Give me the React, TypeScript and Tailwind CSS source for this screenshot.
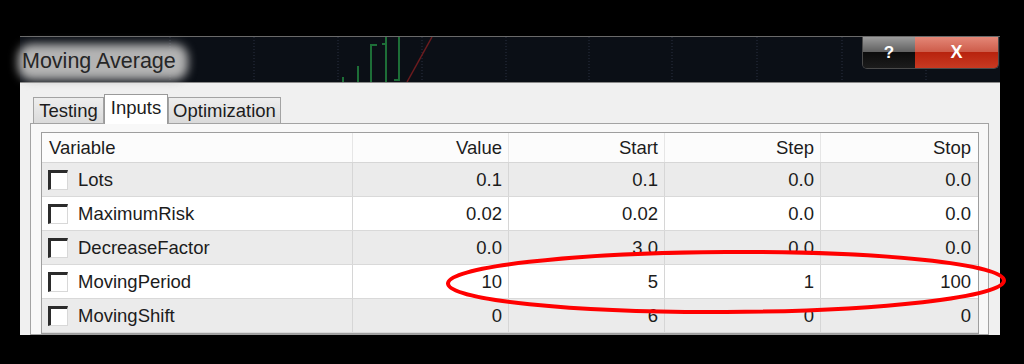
import React from 'react';

interface InputRow {
  name: string;
  value: string;
  start: string;
  step: string;
  stop: string;
}

const rows: InputRow[] = [
  { name: 'Lots', value: '0.1', start: '0.1', step: '0.0', stop: '0.0' },
  { name: 'MaximumRisk', value: '0.02', start: '0.02', step: '0.0', stop: '0.0' },
  { name: 'DecreaseFactor', value: '0.0', start: '3.0', step: '0.0', stop: '0.0' },
  { name: 'MovingPeriod', value: '10', start: '5', step: '1', stop: '100' },
  { name: 'MovingShift', value: '0', start: '6', step: '0', stop: '0' },
];

const gridX = [150, 234, 318, 402, 486, 569, 652, 737, 822, 906];

const ChartStrip: React.FC = () => (
  <svg className="absolute inset-0" width="980" height="45" viewBox="0 0 980 45">
    {gridX.map((x) => (
      <line key={x} x1={x} y1="0" x2={x} y2="45" stroke="#2a3140" strokeWidth="1" strokeDasharray="1 2" />
    ))}
    <g stroke="#1d6e37" strokeWidth="2" fill="none">
      <path d="M323 40 V45" />
      <path d="M338 29 V45" />
      <path d="M351 45 V8 H357" />
      <path d="M366 45 V0 M362 7 H366" />
      <path d="M379 0 V43 H374" />
    </g>
    <line x1="387" y1="45" x2="412" y2="0" stroke="#6b1b1e" strokeWidth="1.5" />
  </svg>
);

const Checkbox: React.FC = () => (
  <div className="w-[20px] h-[20px] bg-white border-t-[3px] border-l-[3px] border-r border-b border-t-[#2b2b2b] border-l-[#2b2b2b] border-r-[#d8d8d8] border-b-[#d8d8d8] shrink-0" />
);

const Tab: React.FC<{ label: string; width: string; active?: boolean }> = ({ label, width, active }) => (
  <div
    className={
      active
        ? `${width} h-[30px] -mb-px flex items-start justify-center pt-[1px] bg-white border border-b-0 border-[#9a9a9a] relative z-10`
        : `${width} h-[26px] flex items-start justify-center pt-[1px] bg-[linear-gradient(to_bottom,#eeeeee,#dadada)] border border-b-0 border-[#a3a3a3]`
    }
  >
    {label}
  </div>
);

const App: React.FC = () => {
  const cell = 'flex items-center justify-end pr-[6px] border-r border-[#d6d6d6]';

  return (
    <div
      className="w-[1024px] h-[364px] bg-black relative overflow-hidden pt-[36px] pl-[20px] text-[#1c1c1c]"
      style={{ fontFamily: '"Liberation Sans", Arial, sans-serif' }}
    >
      <div className="w-[980px] h-[299px] flex flex-col">
        {/* title bar */}
        <div className="h-[47px] bg-[#0b0f16] border-t border-[#6a6a6a] border-b border-b-[#8a8a8a] relative flex items-start justify-between shrink-0">
          <ChartStrip />
          <div className="relative mt-[8px]">
            <div className="absolute -left-[2px] -top-[1px] w-[170px] h-[36px] bg-[#b3b3b3] blur-[5px] rounded-[14px]" />
            <span className="relative block pl-[2px] text-[21.5px] leading-[32px] text-[#262626]">Moving Average</span>
          </div>
          <div className="relative flex mr-[1px] rounded-b-[5px] overflow-hidden border border-t-0 border-[#4a4a4a]">
            <div className="w-[52px] h-[31px] flex items-center justify-center bg-[linear-gradient(to_bottom,#9c9c9c,#5e5e5e_50%,#0c0c0c_50%,#1c1c1c)] text-white font-bold text-[17px]">
              ?
            </div>
            <div className="w-[83px] h-[31px] flex items-center justify-center bg-[linear-gradient(to_bottom,#e48777,#cc5a48_50%,#b8230e_50%,#c83a22)] text-white font-bold text-[18px]">
              X
            </div>
          </div>
        </div>

        {/* dialog body */}
        <div className="flex-1 bg-[#f0f0f0] pt-[13px] pl-[10px] pr-[11px] flex flex-col overflow-hidden">
          <div className="flex items-end pl-[3px] text-[18.5px] leading-[24px] h-[27px]">
            <Tab label="Testing" width="w-[71px]" />
            <Tab label="Inputs" width="w-[64px]" active />
            <Tab label="Optimization" width="w-[113px]" />
          </div>
          <div className="flex-1 bg-[#f8f8f8] border border-[#a3a3a3] pt-[8px] pl-[10px] pr-[9px]">
            <div className="border border-[#9e9e9e] bg-white text-[18.5px] h-full">
              <div className="grid grid-cols-[311px_156px_156px_156px_1fr] h-[30px] bg-[#fcfcfc] border-b border-[#d6d6d6]">
                <div className="flex items-center pl-[7px] border-r border-[#e6e6e6]">Variable</div>
                <div className="flex items-center justify-end pr-[6px] border-r border-[#e6e6e6]">Value</div>
                <div className="flex items-center justify-end pr-[6px] border-r border-[#e6e6e6]">Start</div>
                <div className="flex items-center justify-end pr-[6px] border-r border-[#e6e6e6]">Step</div>
                <div className="flex items-center justify-end pr-[7px]">Stop</div>
              </div>
              {rows.map((row, i) => (
                <div
                  key={row.name}
                  className={`grid grid-cols-[311px_156px_156px_156px_1fr] h-[34px] border-b border-[#d9d9d9] ${
                    i % 2 === 0 ? 'bg-[#ebebeb]' : 'bg-white'
                  }`}
                >
                  <div className="flex items-center pl-[6px] gap-[10px] border-r border-[#d6d6d6]">
                    <Checkbox />
                    <span>{row.name}</span>
                  </div>
                  <div className={cell}>{row.value}</div>
                  <div className={cell}>{row.start}</div>
                  <div className={cell}>{row.step}</div>
                  <div className="flex items-center justify-end pr-[7px]">{row.stop}</div>
                </div>
              ))}
            </div>
          </div>
        </div>
      </div>

      {/* red annotation */}
      <svg className="absolute inset-0 pointer-events-none" width="1024" height="364" viewBox="0 0 1024 364">
        <ellipse cx="726" cy="282" rx="278" ry="30" fill="none" stroke="#ff0000" strokeWidth="4" transform="rotate(-0.3 726 282)" />
      </svg>
    </div>
  );
};

export default App;
